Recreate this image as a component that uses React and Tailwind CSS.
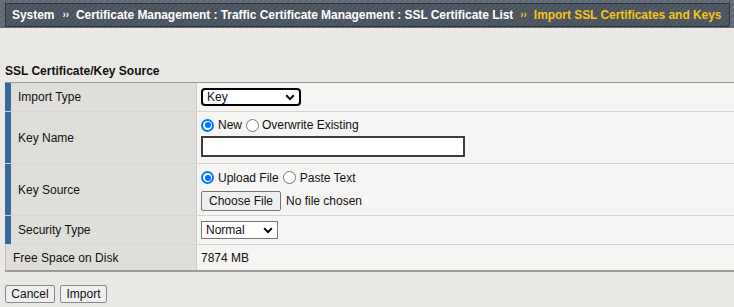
import React from 'react';

const Radio = ({ checked }) => (
  checked ? (
    <span className="inline-block w-[13px] h-[13px] rounded-full bg-[#0075ff] p-[2px] shrink-0">
      <span className="block w-full h-full rounded-full bg-white p-[1.5px]">
        <span className="block w-full h-full rounded-full bg-[#0075ff]" />
      </span>
    </span>
  ) : (
    <span className="inline-block w-[13px] h-[13px] rounded-full border border-[#767676] bg-white shrink-0" />
  )
);

const Chevron = () => (
  <svg width="10" height="7" viewBox="0 0 10 7" className="shrink-0">
    <path d="M1.2 1.3 L5 5.1 L8.8 1.3" fill="none" stroke="#000" strokeWidth="2" />
  </svg>
);

const Label = ({ children, bar = true }) => (
  <div
    className={
      bar
        ? 'flex items-center bg-[#dfdedb] border-r border-[#cbcac6] border-l-[6px] border-l-[#35699b] pl-[7px]'
        : 'flex items-center bg-[#dfdedb] border-r border-[#cbcac6] border-l border-l-[#bdbcb8] pl-[7px]'
    }
  >
    {children}
  </div>
);

const App = () => {
  return (
    <div className="w-[734px] h-[307px] overflow-hidden bg-[#e9e8e4] text-[12px] leading-[14px] text-[#111] font-['Liberation_Sans',Arial,sans-serif]">
      {/* Breadcrumb bar */}
      <div className="h-[28px] pt-[3px] pl-[5px] pr-[4px] bg-[image:repeating-linear-gradient(135deg,#5c6773_0px,#5c6773_2px,#67727e_2px,#67727e_4px)]">
        <div className="h-[24px] flex items-center pl-[6px] border border-[#2e343a] bg-[image:repeating-linear-gradient(135deg,#49525d_0px,#49525d_2px,#505a65_2px,#505a65_4px)] font-bold text-white whitespace-nowrap tracking-[-0.05px]">
          <span>System</span>
          <span className="ml-[8px] mr-[7px] text-[10px]">››</span>
          <span>Certificate Management : Traffic Certificate Management : SSL Certificate List</span>
          <span className="ml-[7px] mr-[7px] text-[10px] text-[#f5c518]">››</span>
          <span className="text-[#f5c518]">Import SSL Certificates and Keys</span>
        </div>
      </div>

      <div className="mt-[36px] pl-[5px] font-bold">SSL Certificate/Key Source</div>

      {/* Form table */}
      <div className="mt-[4px] ml-[5px] w-[729px] border-t border-[#9c9b98] border-b-2 border-b-[#9c9b98]">
        <div className="grid grid-cols-[192px_1fr] h-[29px] border-b border-[#d6d5d2]">
          <Label>Import Type</Label>
          <div className="flex items-center pl-[4px] bg-[#f6f5f3]">
            <div className="w-[100px] h-[18px] flex items-center justify-between pl-[4px] pr-[4px] border-2 border-black rounded-[4px] bg-white">
              <span>Key</span>
              <Chevron />
            </div>
          </div>
        </div>

        <div className="grid grid-cols-[192px_1fr] h-[52px] border-b border-[#d6d5d2]">
          <Label>Key Name</Label>
          <div className="flex flex-col justify-center gap-[4px] pl-[4px] bg-[#f6f5f3]">
            <div className="flex items-center">
              <Radio checked />
              <span className="ml-[4px] mr-[4px]">New</span>
              <Radio />
              <span className="ml-[3px]">Overwrite Existing</span>
            </div>
            <div className="w-[264px] h-[21px] border-2 border-[#3d3d3d] bg-white" />
          </div>
        </div>

        <div className="grid grid-cols-[192px_1fr] h-[52px] border-b border-[#d6d5d2]">
          <Label>Key Source</Label>
          <div className="flex flex-col justify-center gap-[6px] pl-[4px] pt-[2px] bg-[#f6f5f3]">
            <div className="flex items-center">
              <Radio checked />
              <span className="ml-[4px] mr-[4px]">Upload File</span>
              <Radio />
              <span className="ml-[4px]">Paste Text</span>
            </div>
            <div className="flex items-center">
              <div className="w-[80px] h-[20px] flex items-center justify-center border border-[#767676] rounded-[2px] bg-[#efefef]">
                Choose File
              </div>
              <span className="ml-[5px]">No file chosen</span>
            </div>
          </div>
        </div>

        <div className="grid grid-cols-[192px_1fr] h-[29px] border-b border-[#d6d5d2]">
          <Label>Security Type</Label>
          <div className="flex items-center pl-[4px] bg-[#f6f5f3]">
            <div className="w-[77px] h-[18px] flex items-center justify-between pl-[4px] pr-[4px] border border-[#767676] bg-white">
              <span>Normal</span>
              <Chevron />
            </div>
          </div>
        </div>

        <div className="grid grid-cols-[192px_1fr] h-[25px]">
          <Label bar={false}>Free Space on Disk</Label>
          <div className="flex items-center pl-[4px] bg-[#f6f5f3]">7874 MB</div>
        </div>
      </div>

      {/* Buttons */}
      <div className="mt-[13px] ml-[5px] flex gap-[5px]">
        <button className="w-[50px] h-[18px] flex items-center justify-center border border-[#8a8a8a] rounded-[2px] bg-[#efefef]">
          Cancel
        </button>
        <button className="w-[47px] h-[18px] flex items-center justify-center border border-[#8a8a8a] rounded-[2px] bg-[#efefef]">
          Import
        </button>
      </div>
    </div>
  );
};

export default App;
